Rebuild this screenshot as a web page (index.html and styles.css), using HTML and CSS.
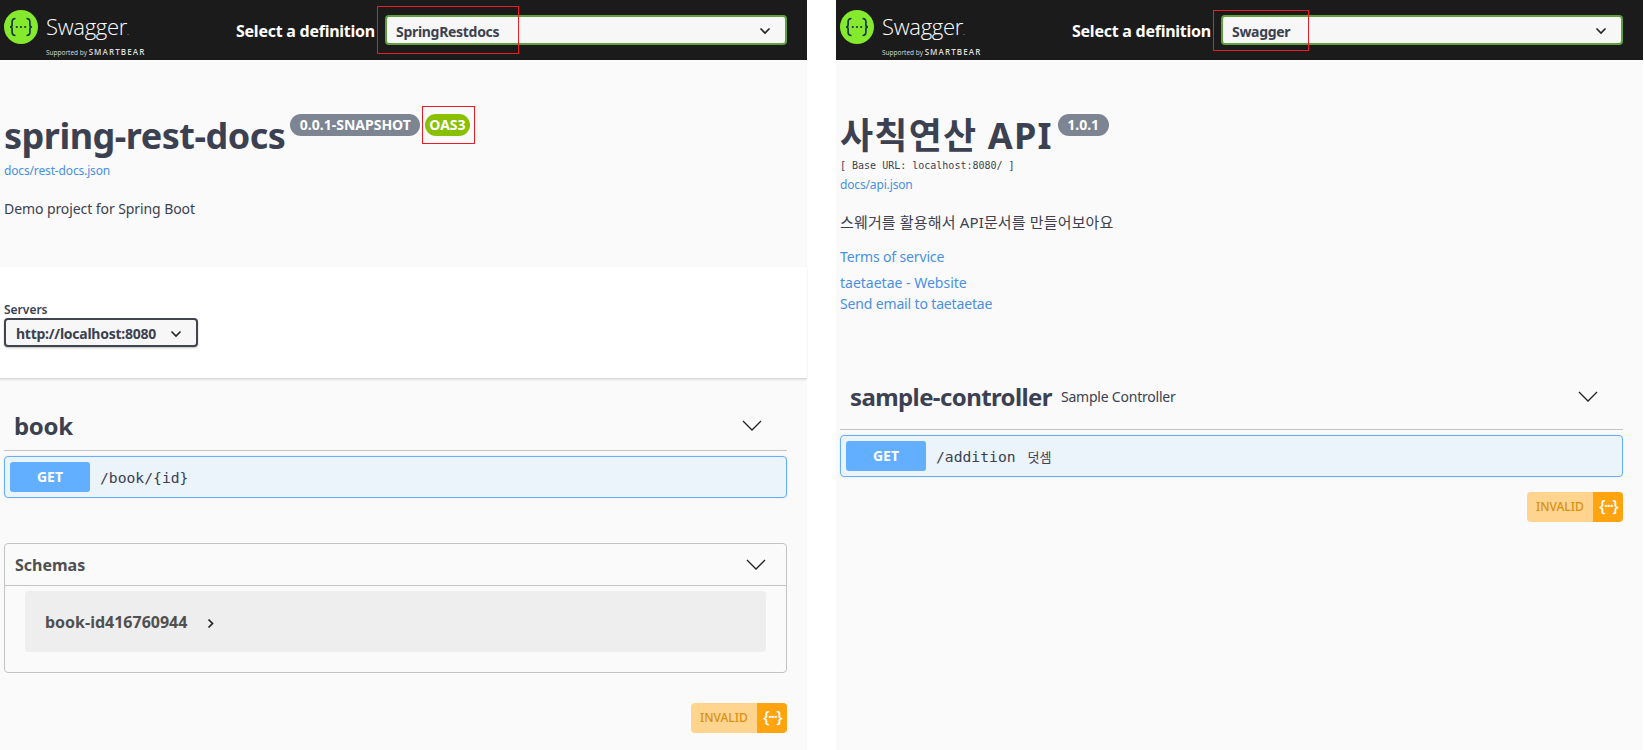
FILE: index.html
```html
<!DOCTYPE html>
<html lang="en">
<head>
<meta charset="utf-8">
<title>Swagger UI comparison</title>
<link rel="stylesheet" href="styles.css">
</head>
<body>
<main class="page">
  <section class="panel panel-a">
    <header class="topbar">
      <div class="logo">
        <svg class="logo-mark" viewBox="0 0 34 34"><circle cx="17" cy="17" r="17" fill="#85ea2d"/><path d="M11.5 8.5c-3 0-3.4 1.5-3.4 3.5v3c0 1.5-.8 2-2.1 2 1.3 0 2.1.5 2.1 2v3c0 2 .4 3.5 3.4 3.5M22.5 8.5c3 0 3.4 1.5 3.4 3.5v3c0 1.5.8 2 2.1 2-1.3 0-2.1.5-2.1 2v3c0 2-.4 3.5-3.4 3.5" fill="none" stroke="#173647" stroke-width="1.7"/><circle cx="12.8" cy="17" r="1.1" fill="#173647"/><circle cx="17" cy="17" r="1.1" fill="#173647"/><circle cx="21.2" cy="17" r="1.1" fill="#173647"/></svg>
        <div class="logo-text"><span class="logo-name">Swagger<small>.</small></span><span class="logo-sub">Supported by <b>SMARTBEAR</b></span></div>
      </div>
      <div class="def-label">Select a definition</div>
      <div class="def-select">SpringRestdocs
        <svg class="chev-small" viewBox="0 0 12 8"><path d="M1.5 1.5 6 6l4.500-4.500" fill="none" stroke="#222" stroke-width="1.6"/></svg>
        <span class="mark mark-def-a"></span>
      </div>
    </header>
    <div class="info info-a">
      <div class="title-row">
        <h1 class="title title-a">spring-rest-docs</h1>
        <span class="badge badge-version">0.0.1-SNAPSHOT</span>
        <span class="badge badge-oas">OAS3<span class="mark mark-oas"></span></span>
      </div>
      <a class="link small-link link-a">docs/rest-docs.json</a>
      <p class="desc desc-a">Demo project for Spring Boot</p>
    </div>
    <div class="servers">
      <div class="servers-label">Servers</div>
      <div class="server-select">http://localhost:8080
        <svg class="chev-small" viewBox="0 0 12 8"><path d="M1.5 1.5 6 6l4.500-4.500" fill="none" stroke="#222" stroke-width="1.6"/></svg>
      </div>
    </div>
    <div class="body body-a">
      <div class="tag-row tag-row-a">
        <h3 class="tag tag-book">book</h3>
        <svg class="chev-large" viewBox="0 0 20 11"><path d="M1 1l9 9 9-9" fill="none" stroke="#222" stroke-width="1.3"/></svg>
      </div>
      <div class="op">
        <span class="method">GET</span><span class="path">/book/{id}</span>
      </div>
      <div class="schemas">
        <div class="schemas-head">
          <span>Schemas</span>
          <svg class="chev-large" viewBox="0 0 20 11"><path d="M1 1l9 9 9-9" fill="none" stroke="#222" stroke-width="1.3"/></svg>
        </div>
        <div class="model">
          <span>book-id416760944</span>
          <svg class="chev-right" viewBox="0 0 7 11"><path d="M1.5 1.5l4 4-4 4" fill="none" stroke="#222" stroke-width="1.7"/></svg>
        </div>
      </div>
      <div class="valid valid-a">
        <span class="valid-text">INVALID</span>
        <span class="valid-icon">{···}</span>
      </div>
    </div>
  </section>

  <section class="panel panel-b">
    <header class="topbar">
      <div class="logo">
        <svg class="logo-mark" viewBox="0 0 34 34"><circle cx="17" cy="17" r="17" fill="#85ea2d"/><path d="M11.5 8.5c-3 0-3.4 1.5-3.4 3.5v3c0 1.5-.8 2-2.1 2 1.3 0 2.1.5 2.1 2v3c0 2 .4 3.5 3.4 3.5M22.5 8.5c3 0 3.4 1.5 3.4 3.5v3c0 1.5.8 2 2.1 2-1.3 0-2.1.5-2.1 2v3c0 2-.4 3.5-3.4 3.5" fill="none" stroke="#173647" stroke-width="1.7"/><circle cx="12.8" cy="17" r="1.1" fill="#173647"/><circle cx="17" cy="17" r="1.1" fill="#173647"/><circle cx="21.2" cy="17" r="1.1" fill="#173647"/></svg>
        <div class="logo-text"><span class="logo-name">Swagger<small>.</small></span><span class="logo-sub">Supported by <b>SMARTBEAR</b></span></div>
      </div>
      <div class="def-label">Select a definition</div>
      <div class="def-select">Swagger
        <svg class="chev-small" viewBox="0 0 12 8"><path d="M1.5 1.5 6 6l4.500-4.500" fill="none" stroke="#222" stroke-width="1.6"/></svg>
        <span class="mark mark-def-b"></span>
      </div>
    </header>
    <div class="info info-b">
      <div class="title-row">
        <h1 class="title title-b">사칙연산 API</h1>
        <span class="badge badge-version">1.0.1</span>
      </div>
      <pre class="base-url">[ Base URL: localhost:8080/ ]</pre>
      <a class="link small-link link-b">docs/api.json</a>
      <p class="desc desc-b">스웨거를 활용해서 API문서를 만들어보아요</p>
      <a class="link link-block link-terms">Terms of service</a>
      <a class="link link-block link-site">taetaetae - Website</a>
      <a class="link link-block link-mail">Send email to taetaetae</a>
      <div class="tag-row tag-row-b">
        <h3 class="tag tag-sample">sample-controller</h3>
        <span class="tag-desc">Sample Controller</span>
        <svg class="chev-large" viewBox="0 0 20 11"><path d="M1 1l9 9 9-9" fill="none" stroke="#222" stroke-width="1.3"/></svg>
      </div>
      <div class="op">
        <span class="method">GET</span><span class="path">/addition</span><span class="op-desc">덧셈</span>
      </div>
      <div class="valid valid-b">
        <span class="valid-text">INVALID</span>
        <span class="valid-icon">{···}</span>
      </div>
    </div>
  </section>
</main>
</body>
</html>
```
FILE: styles.css
```css
* { box-sizing: border-box; }
html, body { margin: 0; padding: 0; background: #fff; height: 750px; overflow: hidden; }
body { font-family: "Noto Sans", "Noto Sans CJK KR", sans-serif; color: #3b4151; }
.page { display: grid; grid-template-columns: 807px 807px; column-gap: 29px; height: 750px; }
.panel { background: #fafafa; display: flex; flex-direction: column; min-width: 0; }

.topbar { height: 60px; background: #1b1b1b; display: flex; align-items: center; padding: 0 20px 0 4px; flex: none; }
.logo { display: flex; align-items: flex-start; gap: 8px; width: 232px; height: 34px; flex: none; margin-top: -6px; }
.logo-mark { width: 34px; height: 34px; flex: none; }
.logo-text { display: flex; flex-direction: column; color: #fff; margin-top: 3px; }
.logo-name { font-family: "Open Sans", sans-serif; font-size: 22px; line-height: 26px; font-weight: 300; letter-spacing: -.3px; }
.logo-name small { font-size: 8px; }
.logo-sub { font-family: "Open Sans", sans-serif; font-size: 6.5px; line-height: 10px; color: #ddd; margin-top: 2px; white-space: nowrap; }
.logo-sub b { font-size: 8px; font-weight: 600; letter-spacing: 1.1px; }
.def-label { width: 149px; flex: none; color: #fff; font-size: 16px; font-weight: 700; white-space: nowrap; letter-spacing: -.25px; padding-top: 2px; }
.def-select { position: relative; flex: 1; height: 30px; border: 2px solid #62a03f; border-radius: 4px; background: #f7f7f7; display: flex; align-items: center; justify-content: space-between; padding: 2px 14px 0 9px; font-size: 14px; font-weight: 700; color: #3b4151; letter-spacing: -.3px; }

.chev-small { width: 12px; height: 8px; flex: none; }
.chev-large { width: 20px; height: 11px; flex: none; }
.chev-right { width: 7px; height: 11px; flex: none; margin: 3px 0 0 20px; }

.mark { position: absolute; border: 1px solid #ed1c24; pointer-events: none; }
.mark-def-a { left: -10px; top: -11px; width: 142px; height: 48px; }
.mark-def-b { left: -10px; top: -7px; width: 96px; height: 41px; }
.mark-oas { left: -3px; top: -8px; height: 38px; right: -5px; }

.info { flex: none; padding: 0 4px; }
.info-a { height: 207px; padding-top: 54px; }
.info-b { flex: 1; padding: 54px 20px 0 4px; }
.title-row { display: flex; align-items: flex-start; height: 46px; }
.title { margin: -1px 0 0; font-size: 36px; line-height: 46px; font-weight: 700; color: #3b4151; white-space: nowrap; }
.title-a { letter-spacing: -.5px; }
.title-b { letter-spacing: 1.2px; }
.badge { position: relative; height: 22px; line-height: 22px; border-radius: 11px; color: #fff; font-size: 14px; font-weight: 700; padding: 0 9px; background: #7d8492; white-space: nowrap; }
.badge-version { margin-left: 5px; padding: 0 9.5px; }
.badge-oas { margin-left: 5px; background: #89bf04; padding: 0 4px; }

.link { color: #4990e2; font-size: 14px; letter-spacing: -.15px; }
.small-link { display: block; font-size: 12px; line-height: 17px; }
.link-a { margin-top: 2px; }
.link-b { margin-top: 3px; }
.link-site { letter-spacing: 0; }
.desc { margin: 0; font-size: 14px; line-height: 20px; color: #3b4151; }
.desc-a { margin-top: 20px; letter-spacing: -.08px; }
.desc-b { margin-top: 19px; font-size: 15px; letter-spacing: .15px; }
.base-url { margin: -2px 0 0; font-family: "DejaVu Sans Mono", monospace; font-size: 10px; line-height: 15px; color: #3b4151; }
.link-block { display: block; line-height: 20px; }
.link-terms { margin-top: 15px; }
.link-site { margin-top: 6px; }
.link-mail { margin-top: 1px; }

.servers { flex: none; height: 112px; background: #fff; padding: 35px 4px 0; border-bottom: 1px solid #d9d9d9; box-shadow: 0 1px 2px rgba(0,0,0,.1); }
.servers-label { font-size: 12px; line-height: 16px; font-weight: 600; color: #3b4151; }
.server-select { width: 194px; height: 29px; border: 2px solid #41444e; border-radius: 4px; background: #f7f7f7; box-shadow: 0 1px 2px rgba(0,0,0,.25); display: flex; align-items: center; justify-content: space-between; padding: 2px 14px 0 10px; font-size: 14px; font-weight: 700; letter-spacing: -.25px; }

.body { flex: 1; padding: 0 20px 0 4px; }
.tag-row { display: flex; align-items: center; border-bottom: 1px solid #c4c4c4; }
.tag-row .chev-large { margin-left: auto; margin-right: 25px; }
.tag-row-a { height: 72px; padding: 22px 0 0 10px; }
.tag-row-b { height: 67px; margin-top: 49px; padding: 0 0 0 10px; }
.tag { margin: 0; color: #3b4151; }
.tag-book { font-size: 24px; font-weight: 700; letter-spacing: -.3px; }
.tag-sample { font-size: 24px; font-weight: 700; letter-spacing: -.6px; }
.tag-desc { font-size: 14px; margin-left: 9px; color: #3b4151; letter-spacing: -.22px; }

.op { display: flex; align-items: center; height: 42px; margin-top: 5px; border: 1px solid #61affe; border-radius: 4px; background: #ebf3fb; padding: 0 5px; box-shadow: 0 0 3px rgba(0,0,0,.08); }
.method { width: 80px; height: 30px; line-height: 30px; border-radius: 3px; background: #61affe; color: #fff; text-align: center; font-size: 14px; font-weight: 700; flex: none; }
.path { margin-left: 10px; font-family: "DejaVu Sans Mono", monospace; font-size: 14.7px; color: #3b4151; }
.op-desc { margin-left: 12px; font-size: 13px; color: #3b4151; }

.schemas { margin-top: 45px; height: 130px; border: 1px solid #c4c4c4; border-radius: 4px; }
.schemas-head { height: 42px; display: flex; align-items: center; justify-content: space-between; padding: 0 20px 0 10px; border-bottom: 1px solid #c4c4c4; font-size: 16px; font-weight: 700; color: #505050; }
.model { height: 61px; margin: 5px 20px 0; border-radius: 4px; background: #eee; display: flex; align-items: center; padding-left: 20px; font-size: 16px; font-weight: 700; color: #505050; }

.valid { display: flex; width: 96px; height: 30px; border-radius: 4px; overflow: hidden; margin-left: auto; }
.valid-a { margin-top: 30px; }
.valid-b { margin-top: 15px; }
.valid-text { flex: 1; background: #ffd48f; color: #d9910f; font-size: 12px; line-height: 30px; padding-left: 9px; font-weight: 500; }
.valid-icon { width: 30px; background: #ffa30f; color: #fff; font-size: 17px; line-height: 27px; text-align: center; font-weight: 500; white-space: nowrap; letter-spacing: -1.8px; }
```
